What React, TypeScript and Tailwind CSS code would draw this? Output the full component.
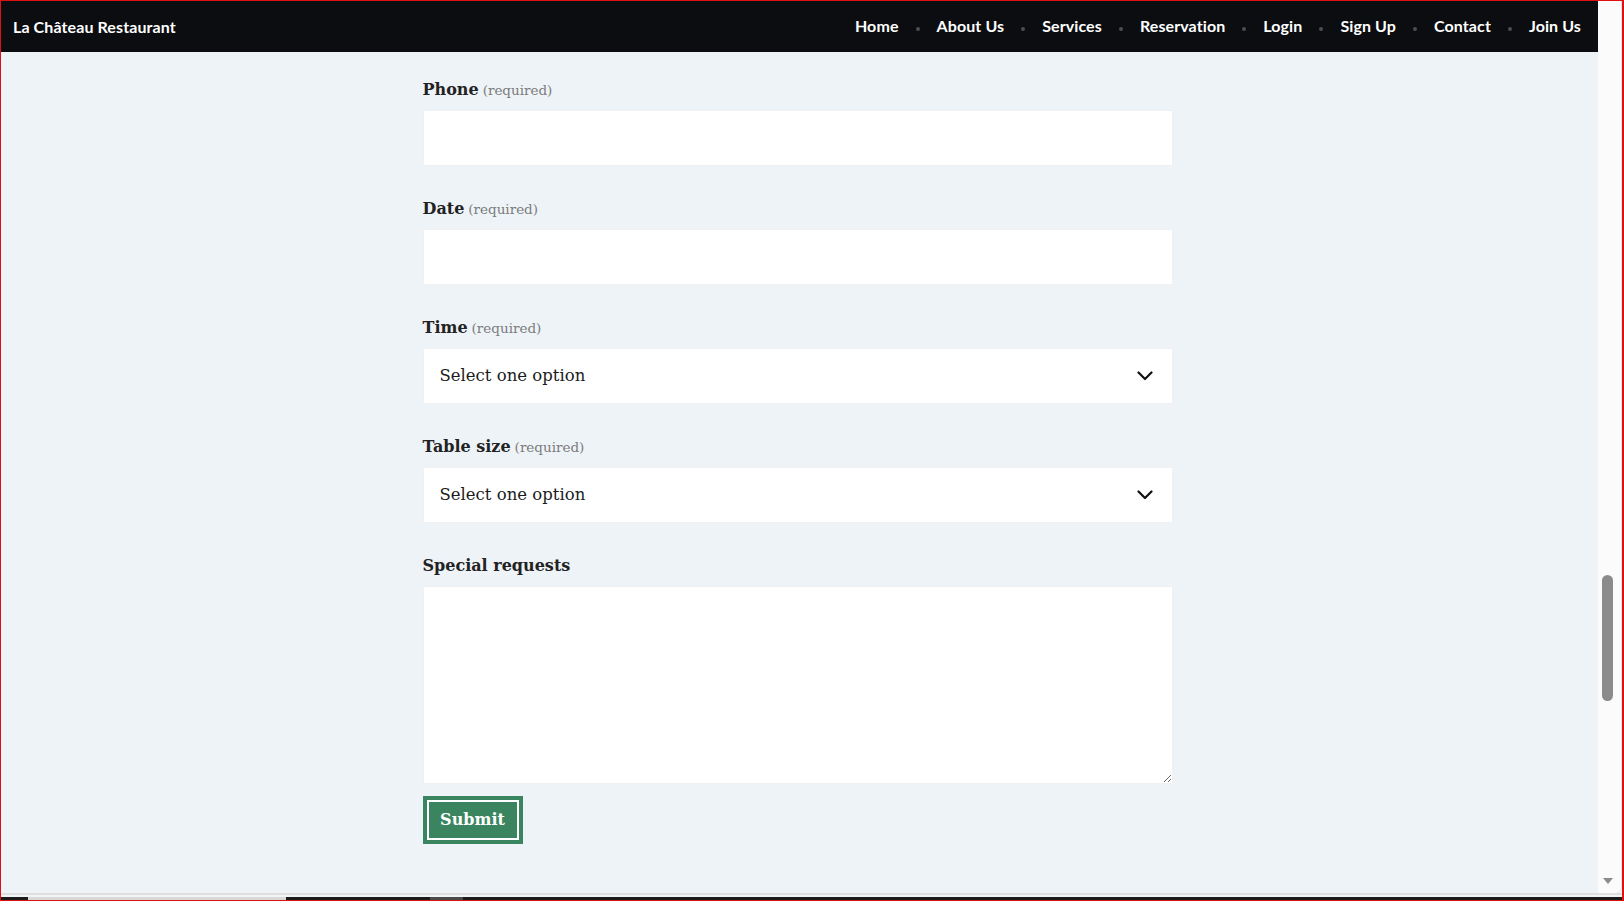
import { type ReactNode } from 'react';

const navLinks = ['Home', 'About Us', 'Services', 'Reservation', 'Login', 'Sign Up', 'Contact', 'Join Us'];

const serif = "font-['DejaVu_Serif',serif]";

function FieldLabel({ children, required }: { children: ReactNode; required?: boolean }) {
  return (
    <label className="block h-6 leading-6 mb-2 text-[16px] font-bold text-[#222]">
      {children}
      {required ? <span className="ml-1 text-[13.5px] font-normal text-[#7b7b7b]">(required)</span> : null}
    </label>
  );
}

function Chevron() {
  return (
    <svg width="16" height="10" viewBox="0 0 16 10" fill="none" stroke="#111" strokeWidth="2.2" strokeLinecap="round" strokeLinejoin="round">
      <path d="M1.5 1.5 L8 8 L14.5 1.5" />
    </svg>
  );
}

function SelectField({ label }: { label: string }) {
  return (
    <div className="mb-[31px]">
      <FieldLabel required>{label}</FieldLabel>
      <div className="relative">
        <select className="block w-full h-[56px] appearance-none bg-white border border-[#eef0f1] pl-4 pr-12 text-[16.5px] text-[#1c1c1c] outline-none">
          <option>Select one option</option>
        </select>
        <span className="pointer-events-none absolute right-[20px] top-1/2 -translate-y-1/2 flex">
          <Chevron />
        </span>
      </div>
    </div>
  );
}

function TextField({ label }: { label: string }) {
  return (
    <div className="mb-[31px]">
      <FieldLabel required>{label}</FieldLabel>
      <input type="text" className="block w-full h-[56px] bg-white border border-[#eef0f1] px-4 outline-none" />
    </div>
  );
}

export default function App() {
  return (
    <div className="w-[1624px] h-[901px] flex flex-col border-t border-l border-b border-r-2 border-[#e01010] bg-[#f2f2f2] overflow-hidden">
      <div className="flex flex-1 min-h-0">
        <div className="flex-1 flex flex-col min-w-0">
          <nav className="h-[51px] shrink-0 bg-[#0b0d10] flex items-center justify-between pl-3 pr-[17px] font-['Lato',sans-serif] text-white">
            <span className="text-[16px] font-bold tracking-[0.1px]">La Château Restaurant</span>
            <ul className="flex items-center gap-[17px]">
              {navLinks.map((link, i) => (
                <li key={link} className="flex items-center gap-[17px]">
                  {i > 0 ? <span className="mt-1 w-[4px] h-[4px] rounded-full bg-[#4a4d52]" /> : null}
                  <a href="#" className="text-[16px] font-bold tracking-[0.1px] -mt-px">
                    {link}
                  </a>
                </li>
              ))}
            </ul>
          </nav>

          <main className={`flex-1 bg-[#eef3f7] pt-[26px] pr-1 ${serif}`}>
            <form className="mx-auto w-[750px]" onSubmit={(e) => e.preventDefault()}>
              <TextField label="Phone" />
              <TextField label="Date" />
              <SelectField label="Time" />
              <SelectField label="Table size" />
              <div>
                <FieldLabel>Special requests</FieldLabel>
                <textarea className="block w-full h-[198px] bg-white border border-[#eef0f1] p-4 outline-none" />
              </div>
              <button
                type="submit"
                className="mt-3 w-[100px] h-[48px] border-4 border-[#3a8560] bg-[#3a8560] shadow-[inset_0_0_0_2px_#fff] text-white text-[16px] font-bold"
              >
                Submit
              </button>
            </form>
          </main>
        </div>

        <div className="w-[24px] shrink-0 bg-[#fbfbfb] rounded-br-md flex flex-col items-start border-r border-[#e4e4e4]">
          <div className="mt-[574px] ml-[4px] w-[11px] h-[126px] rounded-full bg-[#8b8b8b]" />
          <div className="mt-auto mb-[9px] ml-[5px] w-0 h-0 border-l-[5px] border-r-[5px] border-t-[6px] border-l-transparent border-r-transparent border-t-[#8b8b8b]" />
        </div>
      </div>

      <div className="h-[2px] shrink-0 bg-[#dedfe0]" />
      <div className="h-[2px] shrink-0 bg-[#f4f4f4]" />
      <div className="h-[3px] shrink-0 bg-[#1b1b1b] flex">
        <div className="ml-[27px] w-[258px] bg-[#d8d8d8]" />
        <div className="ml-[144px] w-[33px] bg-[#4a4a4a]" />
      </div>
    </div>
  );
}
